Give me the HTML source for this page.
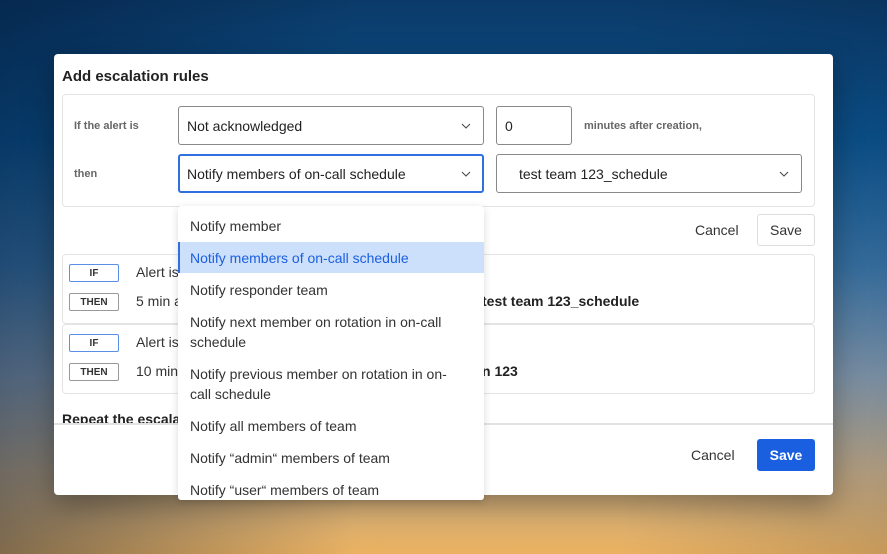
<!DOCTYPE html>
<html><head><style>
*{box-sizing:border-box;margin:0;padding:0}
body{width:887px;height:554px;overflow:hidden;position:relative;font-family:"Liberation Sans",sans-serif;
background:linear-gradient(180deg,#0b3a68 0%,#0c5590 25%,#3c78aa 48%,#8a9fb2 68%,#c8ae88 85%,#eab160 100%);}
.bgl{position:absolute;inset:0;background:linear-gradient(90deg,rgba(0,20,50,.45),rgba(0,0,0,0) 40%,rgba(0,0,0,0) 70%,rgba(0,20,50,.15))}
.modal{position:absolute;left:54px;top:54px;width:779px;height:441px;background:#fff;border-radius:4px;box-shadow:0 10px 30px rgba(0,0,0,.35)}
.t{position:absolute;left:8px;top:14px;font-size:15px;font-weight:bold;color:#222}
.card{position:absolute;border:1px solid #e4e4e4;border-radius:4px;background:#fff}
.lbl{position:absolute;font-size:11px;font-weight:bold;color:#666}
.sel{position:absolute;border:1px solid #888;border-radius:3px;height:39px;font-size:14px;color:#222;padding:11px 8px;background:#fff}
.sel svg{position:absolute;right:12px;top:16px}
.btn{position:absolute;font-size:14px;color:#333}
.tag{position:absolute;left:15px;width:50px;height:18px;border:1px solid #999;border-radius:2px;font-size:10px;font-weight:bold;text-align:center;line-height:17px;color:#333}
.tag.b{border-color:#5b8ee6}
.rt{position:absolute;left:82px;font-size:14px;color:#333}
.dd{position:absolute;left:124px;top:152px;width:306px;height:294px;background:#fff;border-radius:3px;box-shadow:0 2px 8px rgba(0,0,0,.15);font-size:14px;color:#333;overflow:hidden;z-index:2}
.dd div{position:absolute;left:12px;line-height:20px;white-space:nowrap}
</style></head><body><div class="bgl"></div>
<div class="modal">
<div class="t">Add escalation rules</div>
<div class="card" style="left:8px;top:40px;width:753px;height:113px"></div>
<div class="lbl" style="left:20px;top:66px">If the alert is</div>
<div class="lbl" style="left:20px;top:114px">then</div>
<div class="sel" style="left:124px;top:52px;width:306px">Not acknowledged<svg width="10" height="6"><path d="M1 1l4 4 4-4" stroke="#444" fill="none"/></svg></div>
<div class="sel" style="left:442px;top:52px;width:76px">0</div>
<div class="lbl" style="left:530px;top:66px">minutes after creation,</div>
<div class="sel" style="left:124px;top:100px;width:306px;border:2px solid #2f6fe0;padding:10px 7px">Notify members of on-call schedule<svg width="10" height="6" style="right:11px;top:15px"><path d="M1 1l4 4 4-4" stroke="#444" fill="none"/></svg></div>
<div class="sel" style="left:442px;top:100px;width:306px;padding-left:22px">test team 123_schedule<svg width="10" height="6"><path d="M1 1l4 4 4-4" stroke="#444" fill="none"/></svg></div>
<div class="btn" style="left:641px;top:168px">Cancel</div>
<div class="btn" style="left:703px;top:160px;width:58px;height:32px;border:1px solid #ddd;border-radius:3px;text-align:center;line-height:30px">Save</div>
<div class="card" style="left:8px;top:200px;width:753px;height:70px"></div>
<div class="card" style="left:8px;top:270px;width:753px;height:70px"></div>
<div class="tag b" style="top:210px">IF</div><div class="rt" style="top:210px">Alert is</div>
<div class="tag" style="top:239px">THEN</div><div class="rt" style="top:239px">5 min a</div>
<div class="rt" style="left:428px;top:239px;font-weight:bold;color:#222">test team 123_schedule</div>
<div class="tag b" style="top:280px">IF</div><div class="rt" style="top:280px">Alert is</div>
<div class="tag" style="top:309px">THEN</div><div class="rt" style="top:309px">10 min</div>
<div class="rt" style="left:428px;top:309px;font-weight:bold;color:#222">n 123</div>
<div style="position:absolute;left:8px;top:357px;font-size:14px;font-weight:bold;color:#222;height:12px;overflow:hidden">Repeat the escalation</div>
<div style="position:absolute;left:0;top:369px;width:779px;height:2px;background:#e2e2e2"></div>
<div class="btn" style="left:637px;top:393px">Cancel</div>
<div style="position:absolute;left:703px;top:385px;width:58px;height:32px;background:#1a5fe0;border-radius:3px;color:#fff;font-size:14px;font-weight:bold;text-align:center;line-height:32px">Save</div>
<div class="dd">
<div style="top:10px">Notify member</div>
<div style="left:0;top:36px;width:306px;height:31px;background:#cde0fb;border-left:2px solid #2f6fe0"></div>
<div style="top:42px;color:#1a5fe0">Notify members of on-call schedule</div>
<div style="top:74px">Notify responder team</div>
<div style="top:106px">Notify next member on rotation in on-call<br>schedule</div>
<div style="top:158px">Notify previous member on rotation in on-<br>call schedule</div>
<div style="top:210px">Notify all members of team</div>
<div style="top:242px">Notify “admin“ members of team</div>
<div style="top:274px">Notify “user“ members of team</div>
</div>
</div>
</body></html>
